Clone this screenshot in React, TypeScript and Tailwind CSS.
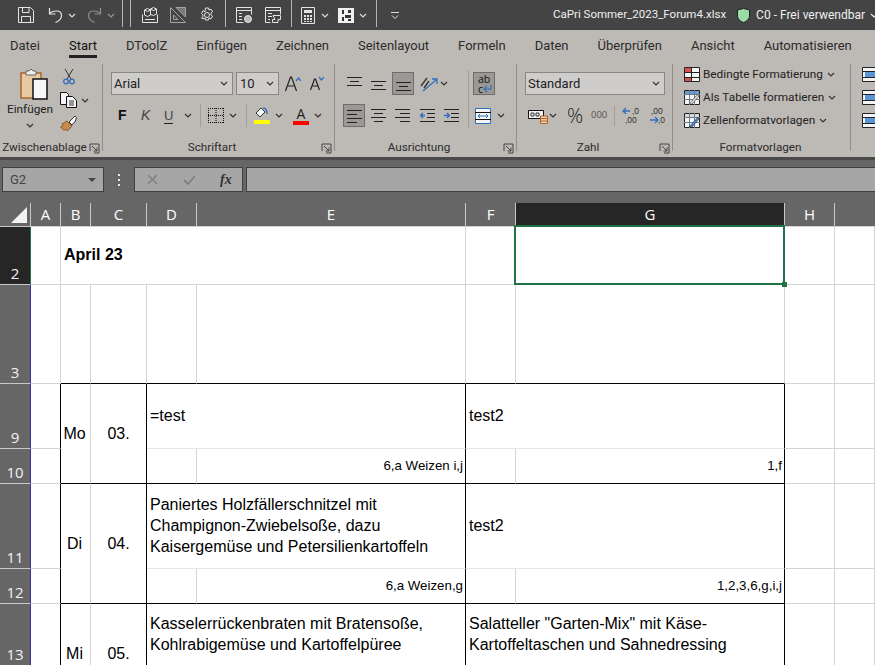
import React from 'react';

const Chev = ({ className = '', color = '#333' }: { className?: string; color?: string }) => (
    <svg width="8" height="5" viewBox="0 0 8 5" className={`shrink-0 ${className}`}>
        <path d="M1 1l3 3 3-3" fill="none" stroke={color} strokeWidth="1.2" />
    </svg>
);

const Launcher = () => (
    <svg width="11" height="11" viewBox="0 0 11 11" className="shrink-0">
        <path d="M1 8V1h9v9H5" fill="none" stroke="#444" />
        <path d="M3 3l5 5M8 4.500V8H4.500" fill="none" stroke="#444" />
    </svg>
);

// each line is [start x, end x, y]
const Lines = ({ rows, className = '' }: { rows: [number, number, number][]; className?: string }) => (
    <svg width="15" height="14" viewBox="0 0 15 14" className={`shrink-0 ${className}`}>
        {rows.map(([a, b, y], i) => (
            <path key={i} d={`M${a} ${y + 0.5}H${b}`} stroke="#222" />
        ))}
    </svg>
);

const Tick = () => <div className="w-px h-[23px] bg-[#a09d9a] shrink-0" />;

const Group = ({ label, width, launcher = true, children }: { label: string; width: string; launcher?: boolean; children: React.ReactNode }) => (
    <div className={`flex flex-col shrink-0 h-full ${width}`}>
        <div className="flex-1 min-h-0">{children}</div>
        <div className="flex items-center h-[16px] mb-[1px] pr-[2px] text-[11.700px] leading-none text-[#2b2b2b]">
            <span className="flex-1 text-center whitespace-nowrap">{label}</span>
            {launcher && <Launcher />}
        </div>
    </div>
);

const Separator = () => <div className="w-px bg-[#8f8c89] mt-[4px] mb-[6px] shrink-0" />;

const TitleSep = ({ className }: { className: string }) => <div className={`w-px h-[27px] self-start bg-[#b5b5b5] shrink-0 ${className}`} />;

const tabs = ['Datei', 'Start', 'DToolZ', 'Einfügen', 'Zeichnen', 'Seitenlayout', 'Formeln', 'Daten', 'Überprüfen', 'Ansicht', 'Automatisieren'];

const TitleBar = () => (
    <div className="flex items-center h-[30px] bg-[#444444] text-[#e8e8e8] shrink-0 overflow-hidden">
        <svg width="16" height="16" viewBox="0 0 16 16" className="ml-[18px] shrink-0" fill="none" stroke="#e4e4e4">
            <path d="M.5.500h12l3 3v12H.5z" />
            <path d="M4.500.500v5h6.500v-5M3.500 15.500v-6h9v6" />
        </svg>
        <svg width="15" height="16" viewBox="0 0 15 16" className="ml-[14px] shrink-0" fill="none" stroke="#e4e4e4" strokeWidth="1.2">
            <path d="M1.500 1v6h6" />
            <path d="M1.500 7C4 3.500 13.500 2 13.500 8.500 13.500 11.500 11 14 7.500 15.500" />
        </svg>
        <Chev className="ml-[5px]" color="#ddd" />
        <svg width="15" height="16" viewBox="0 0 15 16" className="ml-[11px] shrink-0" fill="none" stroke="#8e8e8e" strokeWidth="1.2">
            <path d="M13.500 1v6h-6" />
            <path d="M13.500 7C11 3.500 1.500 2 1.500 8.500 1.500 11.500 4 14 7.500 15.500" />
        </svg>
        <Chev className="ml-[5px]" color="#999" />
        <TitleSep className="ml-[7px]" />
        <TitleSep className="ml-[7px]" />
        <svg width="16" height="16" viewBox="0 0 16 16" className="ml-[11px] shrink-0" fill="none" stroke="#e4e4e4">
            <path d="M.5 7.500v8h15v-8" />
            <path d="M2.500 3l3-1.500 3 1.500v5l-3 1.500-3-1.500zM8.500 2l3-1.500 3 1.500v5l-3 1.500-3-1z" />
            <path d="M2.500 3l3 1.500 3-1.500M8.500 2l3 1.500 3-1.500M3 12.500h10" />
        </svg>
        <svg width="16" height="16" viewBox="0 0 16 16" className="ml-[12px] shrink-0" fill="none" stroke="#a5a5a5">
            <path d="M.5.500l15 15H.5z" />
            <path d="M3.500 8l4.500 4.500H3.500z" />
            <path d="M6 .5l9.500 9.500V.5z" fill="#777" />
        </svg>
        <svg width="16" height="16" viewBox="0 0 16 16" className="ml-[13px] shrink-0" fill="none" stroke="#e4e4e4">
            <circle cx="8" cy="8" r="2.500" />
            <path d="M6.500 1h3l.5 2 2-.8 1.500 2.600-1.500 1.400 0 1.600 1.500 1.400-1.500 2.600-2-.8-.5 2h-3l-.5-2-2 .8L2.500 11l1.500-1.400V8L2.500 6.500 4 3.800l2 .8z" />
        </svg>
        <TitleSep className="ml-[10px]" />
        <svg width="16" height="16" viewBox="0 0 16 16" className="ml-[10px] shrink-0" fill="none" stroke="#e4e4e4">
            <path d="M.5.500h15v7M.5.500v15h7M.5 3.500h15M3 6.500h3M3 9.500h3M3 12.500h3" />
            <circle cx="12" cy="12" r="3.500" fill="#bbb" />
        </svg>
        <svg width="16" height="16" viewBox="0 0 16 16" className="ml-[13px] shrink-0" fill="none" stroke="#e4e4e4">
            <path d="M.5.500h15v7M.5.500v15h5M.5 3.500h15M3 6.500h4M3 9.500h4M3 12.500h2" />
            <path d="M8 8.500h7.500v4H13v3H7.500v-3H10z" />
        </svg>
        <TitleSep className="ml-[10px]" />
        <svg width="14" height="17" viewBox="0 0 14 17" className="ml-[9px] shrink-0">
            <path d="M.5.500h13v16H.5z" fill="none" stroke="#e4e4e4" />
            <path d="M3 3h8v3H3z" fill="#e4e4e4" />
            <path d="M3 8h2v2H3zM6 8h2v2H6zM9 8h2v2H9zM3 11h2v2H3zM6 11h2v2H6zM9 11h2v2H9zM3 14h2v1H3zM6 14h2v1H6zM9 14h2v1H9z" fill="#e4e4e4" />
        </svg>
        <Chev className="ml-[6px]" color="#ddd" />
        <svg width="16" height="15" viewBox="0 0 16 15" className="ml-[9px] shrink-0">
            <path d="M0 0h16v15H0z" fill="#f0f0f0" />
            <path d="M4 2h2v4H4zM10 2h3v3h-3zM7 7h6v3H7zM4 9h2v4H4zM10 11h3v2h-3z" fill="#333" />
        </svg>
        <Chev className="ml-[5px]" color="#ddd" />
        <TitleSep className="ml-[9px]" />
        <svg width="8" height="7" viewBox="0 0 8 7" className="ml-[14px] shrink-0">
            <path d="M0 .5h8M1 3.500l3 3 3-3" fill="none" stroke="#ddd" />
        </svg>
        <div className="ml-auto flex items-center whitespace-nowrap text-[#f0f0f0]">
            <span className="text-[11.500px]">CaPri Sommer_2023_Forum4.xlsx</span>
            <svg width="13" height="15" viewBox="0 0 13 15" className="ml-[11px] shrink-0">
                <path d="M6.500.500L12.500 2v6c0 3-3 5.500-6 6.500-3-1-6-3.500-6-6.500V2z" fill="#9adba6" stroke="#222" />
            </svg>
            <span className="ml-[6px] text-[12px]">C0 - Frei verwendbar</span>
            <Chev className="ml-[5px] mr-[-3px]" color="#eee" />
        </div>
    </div>
);

const TabBar = () => (
    <div className="flex items-start h-[30px] bg-[#bdb9b5] pl-[10px] gap-[29px] shrink-0 text-[13px] text-[#2b2b2b] whitespace-nowrap">
        {tabs.map((tab) => (
            <div key={tab} className={`h-[28px] pt-[7px] leading-[17px] ${tab === 'Start' ? 'border-b-[3px] border-[#222] text-[#111]' : ''}`}>
                {tab}
            </div>
        ))}
    </div>
);

const Clipboard = () => (
    <Group label="Zwischenablage" width="w-[102px]">
        <div className="flex">
            <div className="flex flex-col items-center w-[60px] pt-[8px]">
                <svg width="28" height="32" viewBox="0 0 28 32" className="ml-[7px]">
                    <path d="M1 5h20v25H1z" fill="#e8c9a4" stroke="#a8652a" strokeWidth="1.500" />
                    <path d="M6 3h3l2-2 2 2h3v4H6z" fill="#eee" stroke="#666" />
                    <path d="M13 11h14v20H13z" fill="#f7f7f7" stroke="#111" strokeWidth="1.500" />
                </svg>
                <span className="mt-[1px] text-[11.800px] leading-[17px] text-[#222]">Einfügen</span>
                <Chev className="mt-[5px]" />
            </div>
            <div className="flex flex-col pt-[8px]">
                <svg width="12" height="17" viewBox="0 0 12 17" className="ml-[3px]">
                    <path d="M2 1l6 10M10 1L4 11" fill="none" stroke="#333" />
                    <circle cx="3" cy="13.500" r="2.300" fill="none" stroke="#2f6fbd" strokeWidth="1.300" />
                    <circle cx="9" cy="13.500" r="2.300" fill="none" stroke="#2f6fbd" strokeWidth="1.300" />
                </svg>
                <div className="flex items-center mt-[7px]">
                    <svg width="17" height="16" viewBox="0 0 17 16">
                        <path d="M.5.500h6l2 2v10h-8z" fill="#f5f5f5" stroke="#111" />
                        <path d="M6.500 4.500h6l4 4v7h-10z" fill="#f5f5f5" stroke="#111" />
                        <path d="M9 9h5M9 11h5M9 13h5" stroke="#333" />
                    </svg>
                    <Chev className="ml-[4px]" />
                </div>
                <svg width="17" height="16" viewBox="0 0 17 16" className="mt-[7px]">
                    <path d="M9 7l6-6 1.500 1.500-1 3.500-3.500 4z" fill="#f5f5f5" stroke="#333" />
                    <path d="M7 6l5 5-4 4.500-3-1-1 1-3.500-3.500 2.500-1-1-2z" fill="#c98a4d" stroke="#8a5a2a" />
                </svg>
            </div>
        </div>
    </Group>
);

const Font = () => (
    <Group label="Schriftart" width="w-[231px]">
        <div className="pt-[12px] pl-[8px]">
            <div className="flex items-center h-[23px]">
                <div className="flex items-center justify-between w-[122px] h-[23px] bg-[#cfcdcb] border border-[#8a8886] pl-[2px] pr-[4px] text-[13px] text-[#222]">
                    Arial <Chev />
                </div>
                <div className="flex items-center justify-between w-[43px] h-[23px] ml-[3px] bg-[#cfcdcb] border border-[#8a8886] pl-[3px] pr-[4px] text-[13px] text-[#222]">
                    10 <Chev />
                </div>
                <svg width="16" height="16" viewBox="0 0 16 16" className="ml-[6px]">
                    <path d="M.5 15L5.500 1h1L11.500 15M3 10h6" fill="none" stroke="#222" strokeWidth="1.200" />
                    <path d="M11 5l2.500-3L16 5" fill="none" stroke="#2f6fbd" strokeWidth="1.200" />
                </svg>
                <svg width="14" height="15" viewBox="0 0 14 15" className="ml-[9px]">
                    <path d="M.5 14L4.500 3h1L9.500 14M2.500 10h5" fill="none" stroke="#222" strokeWidth="1.200" />
                    <path d="M9 1l2.500 3L14 1" fill="none" stroke="#2f6fbd" strokeWidth="1.200" />
                </svg>
            </div>
            <div className="flex items-center h-[23px] mt-[9px] text-[#222]">
                <span className="ml-[7px] w-[8px] font-['Liberation_Sans',sans-serif] font-bold text-[14px] text-[#111]">F</span>
                <span className="ml-[15px] w-[8px] font-['Liberation_Sans',sans-serif] italic text-[14px] text-[#444]">K</span>
                <span className="ml-[15px] w-[9px] border-b border-[#222] leading-[15px] font-['Liberation_Sans',sans-serif] text-[13px] text-[#444]">U</span>
                <Chev className="ml-[11px]" />
                <div className="ml-[8px]"><Tick /></div>
                <svg width="16" height="15" viewBox="0 0 16 15" className="ml-[7px]">
                    <path d="M0 .5h16M0 14.500h16M.5 0v15M15.500 0v15M0 7.500h16M8 0v15" fill="none" stroke="#111" strokeDasharray="1 1" />
                </svg>
                <Chev className="ml-[5px]" />
                <div className="ml-[9px]"><Tick /></div>
                <div className="flex flex-col items-center ml-[7px] w-[16px]">
                    <svg width="14" height="12" viewBox="0 0 14 12">
                        <path d="M6 1L1 6l4 4 5-5z" fill="#f5f5f5" stroke="#333" />
                        <path d="M8 1c3 0 4 3 4 6" fill="none" stroke="#2f6fbd" strokeWidth="1.500" />
                    </svg>
                    <div className="w-[16px] h-[4px] mt-[1px] bg-[#ffff00]" />
                </div>
                <Chev className="ml-[5px]" />
                <div className="flex flex-col items-center ml-[10px] w-[16px]">
                    <span className="font-['Open_Sans',sans-serif] text-[14px] leading-[13px] text-[#222]">A</span>
                    <div className="w-[16px] h-[4px] mt-[1px] bg-[#ff0000]" />
                </div>
                <Chev className="ml-[5px]" />
            </div>
        </div>
    </Group>
);

const Alignment = () => (
    <Group label="Ausrichtung" width="w-[181px]">
        <div className="pt-[12px]">
            <div className="flex items-center h-[23px]">
                <Lines className="ml-[12px]" rows={[[0, 15, 0], [3, 12, 4], [0, 15, 8]]} />
                <Lines className="ml-[9px]" rows={[[0, 15, 4], [3, 12, 8], [0, 15, 12]]} />
                <div className="flex items-center justify-center w-[22px] h-[23px] ml-[6px] bg-[#9b9895] border border-[#6f6d6b]">
                    <Lines rows={[[0, 15, 5], [3, 12, 9], [0, 15, 13]]} />
                </div>
                <svg width="18" height="17" viewBox="0 0 18 17" className="ml-[6px]">
                    <path d="M1 11L7 3M4 13l5-7" fill="none" stroke="#333" strokeWidth="1.300" />
                    <path d="M3 16L16 5M12 4h5v5" fill="none" stroke="#2f6fbd" strokeWidth="1.300" />
                </svg>
                <Chev className="ml-[2px]" />
                <div className="w-px h-[58px] self-start -mt-[2px] bg-[#a09d9a] ml-[20px]" />
                <div className="flex flex-col justify-center w-[22px] h-[23px] ml-[4px] pl-[4px] bg-[#9b9895] border border-[#6f6d6b] font-['Open_Sans',sans-serif] text-[10.500px] leading-[10px] text-[#111]">
                    <span>ab</span>
                    <div className="flex items-center">
                        <span>c</span>
                        <svg width="9" height="8" viewBox="0 0 9 8" className="shrink-0">
                            <path d="M8 0v4H1M4 1L1 4l3 3" fill="none" stroke="#2f6fbd" strokeWidth="1.200" />
                        </svg>
                    </div>
                </div>
            </div>
            <div className="flex items-center h-[23px] mt-[9px]">
                <div className="flex items-center justify-center w-[22px] h-[23px] ml-[8px] bg-[#9b9895] border border-[#6f6d6b]">
                    <Lines rows={[[0, 15, 1], [0, 10, 5], [0, 15, 9], [0, 10, 13]]} />
                </div>
                <Lines className="ml-[6px]" rows={[[0, 15, 0], [3, 12, 4], [0, 15, 8], [3, 12, 12]]} />
                <Lines className="ml-[9px]" rows={[[0, 15, 0], [5, 15, 4], [0, 15, 8], [5, 15, 12]]} />
                <svg width="15" height="14" viewBox="0 0 15 14" className="ml-[10px]">
                    <path d="M0 .5h15M7 4.500h8M7 8.500h8M0 12.500h15" stroke="#222" />
                    <path d="M5 6.500H0M3 4L.5 6.500 3 9" fill="none" stroke="#2f6fbd" strokeWidth="1.300" />
                </svg>
                <svg width="15" height="14" viewBox="0 0 15 14" className="ml-[9px]">
                    <path d="M0 .5h15M7 4.500h8M7 8.500h8M0 12.500h15" stroke="#222" />
                    <path d="M0 6.500h5M3 4l2.500 2.500L3 9" fill="none" stroke="#2f6fbd" strokeWidth="1.300" />
                </svg>
                <svg width="16" height="16" viewBox="0 0 16 16" className="ml-[16px]">
                    <path d="M.5.500h15v15H.5z" fill="#f5f5f5" stroke="#2f6fbd" />
                    <path d="M0 4.500h16M0 11.500h16" stroke="#111" />
                    <path d="M3 8h10M5 6L3 8l2 2M11 6l2 2-2 2" fill="none" stroke="#2f6fbd" />
                </svg>
                <Chev className="ml-[6px]" />
            </div>
        </div>
    </Group>
);

const NumberGroup = () => (
    <Group label="Zahl" width="w-[155px]">
        <div className="pt-[12px]">
            <div className="flex items-center justify-between w-[140px] h-[23px] ml-[8px] bg-[#cfcdcb] border border-[#8a8886] pl-[2px] pr-[4px] text-[13px] text-[#222]">
                Standard <Chev />
            </div>
            <div className="flex items-center h-[23px] mt-[9px] text-[#333]">
                <svg width="20" height="16" viewBox="0 0 20 16" className="ml-[11px]">
                    <path d="M.5 2.500h15v8H.5z" fill="#f5f5f5" stroke="#111" />
                    <path d="M3 5h3v3H3zM8 5h3v3H8z" fill="none" stroke="#333" />
                    <path d="M12.500 8h7v7.500h-7z" fill="#eecfa8" stroke="#b0652b" />
                    <path d="M12.500 10.500h7M12.500 13h7" stroke="#b0652b" />
                </svg>
                <Chev className="ml-[1px]" />
                <span className="ml-[10px] w-[17px] font-['Open_Sans',sans-serif] font-light text-[20px] leading-none text-[#222]">%</span>
                <span className="ml-[7px] w-[16px] font-['Open_Sans',sans-serif] text-[9.500px] text-[#555]">000</span>
                <div className="ml-[7px] w-px h-[20px] bg-[#a09d9a]" />
                <svg width="17" height="18" viewBox="0 0 17 18" className="ml-[7px]">
                    <path d="M8 4H1M4 1L1 4l3 3" fill="none" stroke="#2f6fbd" strokeWidth="1.300" />
                    <text x="10" y="7" fontSize="8.500" fill="#333" fontFamily="Liberation Sans">,0</text>
                    <text x="3" y="16" fontSize="8.500" fill="#333" fontFamily="Liberation Sans">,00</text>
                </svg>
                <svg width="15" height="18" viewBox="0 0 15 18" className="ml-[11px]">
                    <path d="M0 13h8M5 10l3 3-3 3" fill="none" stroke="#2f6fbd" strokeWidth="1.300" />
                    <text x="1" y="7" fontSize="8.500" fill="#333" fontFamily="Liberation Sans">,00</text>
                    <text x="8" y="16" fontSize="8.500" fill="#333" fontFamily="Liberation Sans">,0</text>
                </svg>
            </div>
        </div>
    </Group>
);

const StyleIcon = ({ kind }: { kind: number }) => (
    <svg width="16" height="15" viewBox="0 0 16 15" className="shrink-0">
        <path d="M.5.500h15v14H.5z" fill="#f5f5f5" stroke="#222" />
        {kind === 0 ? (
            <>
                <path d="M1 1h6v4H1zM1 10h6v4H1z" fill="#d9534f" />
                <path d="M7.500 0v15M0 5.500h16M0 10.500h16" stroke="#222" />
            </>
        ) : (
            <>
                <path d="M1 1h14v3H1z" fill={kind === 1 ? '#6d9bd3' : '#d8d8d8'} />
                <path d="M5.500 0v15M10.500 0v15M0 4.500h16M0 9.500h16" stroke="#6b7b8c" />
                <path d="M5 14L14 4l1 2-7 8z" fill={kind === 1 ? '#ddd' : '#4a8ad4'} stroke="#333" strokeWidth=".6" />
            </>
        )}
    </svg>
);

const Styles = () => (
    <Group label="Formatvorlagen" width="w-[177px]" launcher={false}>
        <div className="flex flex-col gap-[6px] pt-[6px] pl-[11px] text-[11.800px] leading-[17px] text-[#222] whitespace-nowrap">
            {['Bedingte Formatierung', 'Als Tabelle formatieren', 'Zellenformatvorlagen'].map((name, i) => (
                <div key={name} className="flex items-center">
                    <StyleIcon kind={i} />
                    <span className="ml-[3px]">{name}</span>
                    <Chev className="ml-[4px]" />
                </div>
            ))}
        </div>
    </Group>
);

const CellsGroup = () => (
    <div className="flex flex-col gap-[8px] pt-[7px] pl-[11px] overflow-hidden">
        {[0, 1, 2].map((i) => (
            <svg key={i} width="16" height="15" viewBox="0 0 16 15" className="shrink-0">
                <path d="M.5.500h15v14H.5z" fill="#f5f5f5" stroke="#222" />
                <path d="M3 4h13v7H3z" fill="#5a96d6" />
                <path d="M0 4.500h16M0 10.500h16" stroke="#222" />
            </svg>
        ))}
    </div>
);

const Ribbon = () => (
    <div className="flex h-[97px] bg-[#bdb9b5] shrink-0 overflow-hidden">
        <Clipboard />
        <Separator />
        <Font />
        <Separator />
        <Alignment />
        <Separator />
        <NumberGroup />
        <Separator />
        <Styles />
        <Separator />
        <CellsGroup />
    </div>
);

const FormulaBar = () => (
    <div className="flex items-center h-[46px] pb-[4px] bg-[#666666] border-t-[3px] border-[#4a4a4a] shrink-0">
        <div className="flex items-center justify-between w-[102px] h-[25px] ml-[2px] bg-[#a6a6a6] border border-[#3f3f3f] pl-[7px] pr-[7px] text-[13px] text-[#444]">
            G2
            <span className="w-0 h-0 border-x-[4px] border-x-transparent border-t-[4px] border-t-[#444]" />
        </div>
        <div className="flex flex-col gap-[3px] ml-[14px]">
            <span className="w-[2px] h-[2px] bg-[#e8e8e8]" />
            <span className="w-[2px] h-[2px] bg-[#e8e8e8]" />
            <span className="w-[2px] h-[2px] bg-[#e8e8e8]" />
        </div>
        <div className="flex items-center w-[109px] h-[25px] ml-[14px] bg-[#a6a6a6] border border-[#3f3f3f]">
            <svg width="11" height="11" viewBox="0 0 11 11" className="ml-[12px]">
                <path d="M1 1l9 9M10 1l-9 9" stroke="#7f7f7f" strokeWidth="1.500" />
            </svg>
            <svg width="13" height="10" viewBox="0 0 13 10" className="ml-[25px]">
                <path d="M1 5l4 4 7-8" fill="none" stroke="#7f7f7f" strokeWidth="1.800" />
            </svg>
            <span className="ml-[24px] font-['Liberation_Serif',serif] italic font-bold text-[14px] text-[#333]">fx</span>
        </div>
        <div className="flex-1 h-[25px] ml-[3px] bg-[#a6a6a6] border border-[#3f3f3f] border-r-0" />
    </div>
);

const ColHeader = ({ name, active }: { name: string; active?: boolean }) => (
    <div className={`flex items-center justify-center border-r border-[#c8c8c8] font-['Open_Sans',sans-serif] text-[15px] text-white border-b ${active ? 'bg-[#262626] border-b-[#217346]' : 'bg-[#666666] border-b-[#d4d4d4]'}`}>
        {name}
    </div>
);

const RowHeader = ({ n, active }: { n: number; active?: boolean }) => (
    <div className={`flex items-end justify-center pb-[1px] border-b border-[#c8c8c8] border-r font-['Open_Sans',sans-serif] text-[15px] leading-[20px] text-[#f2f2f2] ${active ? 'bg-[#262626] border-r-[#217346]' : 'bg-[#666666] border-r-[#3030a0]'}`}>
        {n}
    </div>
);

const G = 'border-r border-b border-[#d4d4d4]';

const MenuRow = ({ num, day, date, left, right, codeL, codeR }: { num: number; day: string; date: string; left: React.ReactNode; right: React.ReactNode; codeL: string; codeR: string }) => (
    <>
        <RowHeader n={num} />
        <div className="border-r border-r-black border-b border-b-[#d4d4d4]" />
        <div className="row-span-2 flex items-center justify-center pr-[2px] border-r border-r-[#d4d4d4] border-b border-b-black">{day}</div>
        <div className="row-span-2 flex items-center justify-center border-r border-r-black border-b border-b-black">{date}</div>
        <div className="col-span-2 flex items-center pl-[3px] pb-[2px] border-r border-r-black border-b border-b-[#e6e6e6] leading-[21px]">{left}</div>
        <div className="col-span-2 flex items-center pl-[3px] pb-[2px] border-r border-r-black border-b border-b-[#e6e6e6] leading-[21px]">{right}</div>
        <div className={G} />
        <div className={G} />

        <RowHeader n={num + 1} />
        <div className="border-r border-r-black border-b border-b-[#d4d4d4]" />
        <div className="border-r border-r-[#d4d4d4] border-b border-b-black" />
        <div className="flex items-center justify-end pr-[2px] border-r border-r-black border-b border-b-black text-[13.300px] whitespace-nowrap">{codeL}</div>
        <div className="border-r border-r-[#d4d4d4] border-b border-b-black" />
        <div className="flex items-center justify-end pr-[2px] border-r border-r-black border-b border-b-black text-[13.300px] whitespace-nowrap">{codeR}</div>
        <div className={G} />
        <div className={G} />
    </>
);

const Sheet = () => (
    <div className="grid flex-1 min-h-0 overflow-hidden bg-white font-['Liberation_Sans',sans-serif] text-[16px] text-black grid-cols-[31px_30px_30px_56px_50px_269px_50px_269px_50px_1fr] grid-rows-[24px_58px_99px_65px_35px_85px_35px_62px_39px]">
        <div className="flex items-end justify-end bg-[#666666] border-r border-b border-[#c8c8c8] pr-[3px] pb-[3px]">
            <div className="w-0 h-0 border-l-[16px] border-l-transparent border-b-[16px] border-b-[#f2f2f2]" />
        </div>
        {['A', 'B', 'C', 'D', 'E', 'F'].map((c) => <ColHeader key={c} name={c} />)}
        <ColHeader name="G" active />
        <ColHeader name="H" />
        <div className="bg-[#666666] border-b border-[#d4d4d4]" />

        <RowHeader n={2} active />
        <div className={G} />
        <div className="col-span-4 flex items-center pl-[3px] pb-[2px] font-bold border-r border-b border-[#d4d4d4]">April 23</div>
        <div className={G} />
        <div className="relative">
            <div className="absolute -left-[2px] -top-[2px] right-0 bottom-0 border-2 border-[#217346] z-10" />
            <div className="absolute -right-[2px] -bottom-[2px] w-[5px] h-[5px] bg-[#217346] z-20" />
        </div>
        <div className={G} />
        <div className={G} />

        <RowHeader n={3} />
        <div className={G} />
        {[0, 1, 2, 3, 4, 5].map((i) => (
            <div key={i} className="border-r border-r-[#d4d4d4] border-b border-b-black" />
        ))}
        <div className={G} />
        <div className={G} />

        <MenuRow num={9} day="Mo" date="03." left="=test" right="test2" codeL="6,a Weizen i,j" codeR="1,f" />
        <MenuRow
            num={11}
            day="Di"
            date="04."
            left={<span>Paniertes Holzfällerschnitzel mit<br />Champignon-Zwiebelsoße, dazu<br />Kaisergemüse und Petersilienkartoffeln</span>}
            right="test2"
            codeL="6,a Weizen,g"
            codeR="1,2,3,6,g,i,j"
        />
        <MenuRow
            num={13}
            day="Mi"
            date="05."
            left={<span>Kasselerrückenbraten mit Bratensoße,<br />Kohlrabigemüse und Kartoffelpüree</span>}
            right={<span>Salatteller "Garten-Mix" mit Käse-<br />Kartoffeltaschen und Sahnedressing</span>}
            codeL=""
            codeR=""
        />
    </div>
);

const App: React.FC = () => {
    return (
        <div className="flex flex-col w-screen h-screen overflow-hidden font-['Roboto',sans-serif]">
            <TitleBar />
            <TabBar />
            <Ribbon />
            <FormulaBar />
            <Sheet />
        </div>
    );
};

export default App;
